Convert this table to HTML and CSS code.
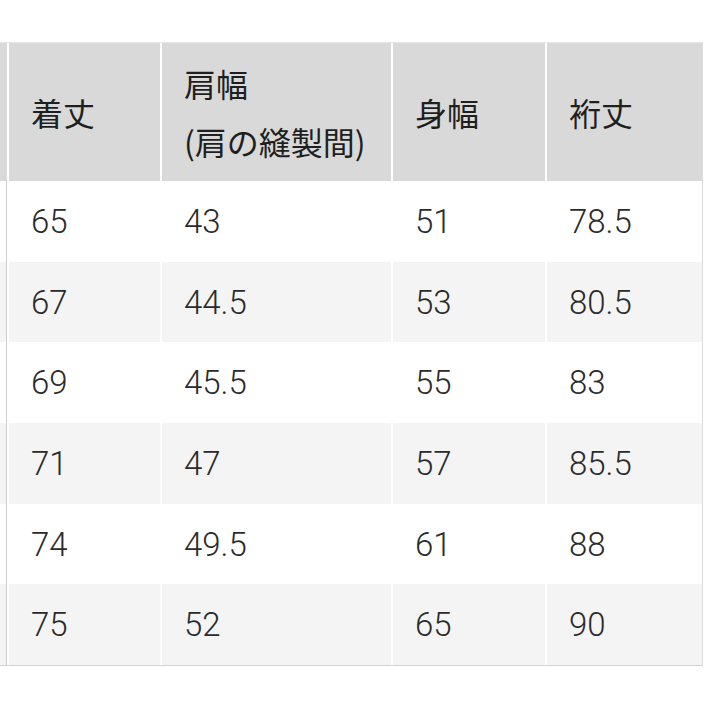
FILE: index.html
```html
<!DOCTYPE html>
<html lang="ja">
<head>
<meta charset="utf-8">
<title>サイズ表</title>
<link rel="stylesheet" href="styles.css">
</head>
<body>
<div class="page">
  <div class="size-table">
    <div class="row head">
      <div class="cell edge"></div>
      <div class="cell">着丈</div>
      <div class="cell two">肩幅<br>(肩の縫製間)</div>
      <div class="cell">身幅</div>
      <div class="cell">裄丈</div>
    </div>
    <div class="row">
      <div class="cell edge"></div><div class="cell">65</div><div class="cell">43</div><div class="cell">51</div><div class="cell">78.5</div>
    </div>
    <div class="row alt">
      <div class="cell edge"></div><div class="cell">67</div><div class="cell">44.5</div><div class="cell">53</div><div class="cell">80.5</div>
    </div>
    <div class="row">
      <div class="cell edge"></div><div class="cell">69</div><div class="cell">45.5</div><div class="cell">55</div><div class="cell">83</div>
    </div>
    <div class="row alt">
      <div class="cell edge"></div><div class="cell">71</div><div class="cell">47</div><div class="cell">57</div><div class="cell">85.5</div>
    </div>
    <div class="row">
      <div class="cell edge"></div><div class="cell">74</div><div class="cell">49.5</div><div class="cell">61</div><div class="cell">88</div>
    </div>
    <div class="row alt">
      <div class="cell edge"></div><div class="cell">75</div><div class="cell">52</div><div class="cell">65</div><div class="cell">90</div>
    </div>
  </div>
</div>
</body>
</html>
```

FILE: styles.css
```css
html, body {
  margin: 0;
  padding: 0;
  background: #ffffff;
}

.page {
  width: 706px;
  height: 706px;
  overflow: hidden;
  padding-top: 42px;
  box-sizing: border-box;
}

.size-table {
  width: 703px;
  border-top: 1px solid #e6e6e6;
  border-bottom: 1px solid #d2d2d2;
  border-right: 1px solid #dcdcdc;
  box-sizing: border-box;
  display: flex;
  flex-direction: column;
  background: #ffffff;
}

.row {
  display: grid;
  grid-template-columns: 7px 151px 229px 152px 155px;
  column-gap: 2px;
  height: 80.7px;
  background: #ffffff;
  font-family: Roboto, "Noto Sans CJK JP", sans-serif;
  font-size: 33px;
  font-weight: 300;
  color: #2b2b2b;
}

.row.head {
  height: 138px;
  font-family: "Noto Sans CJK JP", "Noto Sans", sans-serif;
  font-size: 32px;
  font-weight: 400;
  color: #1f1f1f;
}

.cell {
  display: flex;
  align-items: center;
  padding-left: 22px;
  box-sizing: border-box;
  background: #ffffff;
}

.head .cell {
  background: #d9d9d9;
}

.head .cell.two {
  line-height: 58px;
}

.alt .cell {
  background: #f4f4f4;
}

.cell.edge {
  padding: 0;
  box-shadow: inset -1px 0 0 #cfcfcf;
}

.head .cell.edge {
  box-shadow: none;
}
```
